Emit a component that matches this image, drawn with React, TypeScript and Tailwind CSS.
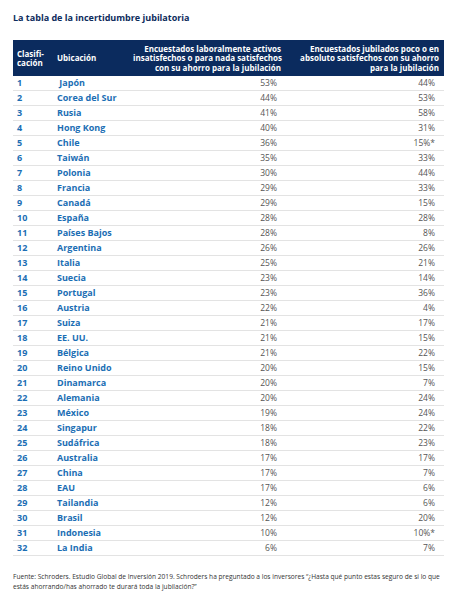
import React from 'react';

type Row = [number, string, string, string];

const rows: Row[] = [
  [1, '\u00a0Japón', '53%', '44%'],
  [2, 'Corea del Sur', '44%', '53%'],
  [3, 'Rusia', '41%', '58%'],
  [4, 'Hong Kong', '40%', '31%'],
  [5, 'Chile', '36%', '15%*'],
  [6, 'Taiwán', '35%', '33%'],
  [7, 'Polonia', '30%', '44%'],
  [8, 'Francia', '29%', '33%'],
  [9, 'Canadá', '29%', '15%'],
  [10, 'España', '28%', '28%'],
  [11, 'Países Bajos', '28%', '8%'],
  [12, 'Argentina', '26%', '26%'],
  [13, 'Italia', '25%', '21%'],
  [14, 'Suecia', '23%', '14%'],
  [15, 'Portugal', '23%', '36%'],
  [16, 'Austria', '22%', '4%'],
  [17, 'Suiza', '21%', '17%'],
  [18, 'EE. UU.', '21%', '15%'],
  [19, 'Bélgica', '21%', '22%'],
  [20, 'Reino Unido', '20%', '15%'],
  [21, 'Dinamarca', '20%', '7%'],
  [22, 'Alemania', '20%', '24%'],
  [23, 'México', '19%', '24%'],
  [24, 'Singapur', '18%', '22%'],
  [25, 'Sudáfrica', '18%', '23%'],
  [26, 'Australia', '17%', '17%'],
  [27, 'China', '17%', '7%'],
  [28, 'EAU', '17%', '6%'],
  [29, 'Tailandia', '12%', '6%'],
  [30, 'Brasil', '12%', '20%'],
  [31, 'Indonesia', '10%', '10%*'],
  [32, 'La India', '6%', '7%'],
];

const cols = 'grid grid-cols-[40px_80px_160px_151px]';

const App: React.FC = () => {
  return (
    <div className="w-[458px] h-[600px] bg-white px-[13px] pt-[11px] font-['Open_Sans',sans-serif]">
      <h1 className="text-[9px] leading-[14px] font-bold text-[#0d2c5c]">
        La tabla de la incertidumbre jubilatoria
      </h1>

      <div className="mt-[15px] w-[431px]">
        {/* header */}
        <div className={`${cols} bg-[#0b2b5e] text-white text-[8px] leading-[9.5px] font-bold h-[36px] items-center whitespace-nowrap`}>
          <div className="pl-[4px]">
            Clasifi-
            <br />
            cación
          </div>
          <div className="pl-[4px]">Ubicación</div>
          <div className="text-right pr-[12px]">
            Encuestados laboralmente activos
            <br />
            insatisfechos o para nada satisfechos
            <br />
            con su ahorro para la jubilación
          </div>
          <div className="text-right pr-[5px]">
            Encuestados jubilados poco o en
            <br />
            absoluto satisfechos con su ahorro
            <br />
            para la jubilación
          </div>
        </div>

        {rows.map(([rank, country, a, b]) => (
          <div
            key={rank}
            className={`${cols} h-[15px] items-center border-b border-[#e3e3e3] text-[9px] leading-[12px]`}
          >
            <div className="pl-[4px] font-bold text-[#1b6eb4]">{rank}</div>
            <div className="pl-[4px] font-bold text-[#1b6eb4] whitespace-nowrap">{country}</div>
            <div className="text-right pr-[16px] text-[8.5px] text-[#555]">{a}</div>
            <div className="text-right pr-[9px] text-[8.5px] text-[#555]">{b}</div>
          </div>
        ))}
      </div>

      <p className="mt-[16px] text-[6.6px] leading-[10px] text-[#333]">
        Fuente: Schroders. Estudio Global de Inversión 2019. Schroders ha preguntado a los inversores “¿Hasta qué punto estas seguro de si lo que
        estás ahorrando/has ahorrado te durará toda la jubilación?”
      </p>
    </div>
  );
};

export default App;
